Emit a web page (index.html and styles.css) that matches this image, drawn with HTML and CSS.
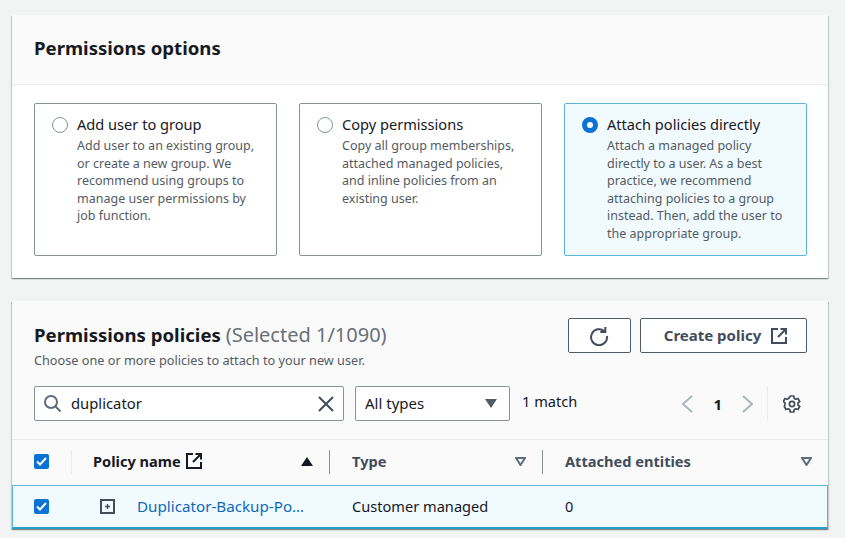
FILE: index.html
```html
<!DOCTYPE html>
<html lang="en">
<head>
    <meta charset="UTF-8">
    <title>Set permissions</title>
    <link rel="stylesheet" href="styles.css">
</head>
<body>

<section class="card options-card">
    <div class="options-head">
        <h2>Permissions options</h2>
    </div>
    <div class="options">
        <div class="option">
            <span class="radio"></span>
            <div>
                <div class="option-title">Add user to group</div>
                <div class="option-text">Add user to an existing group, or create a new group. We recommend using groups to manage user permissions by job function.</div>
            </div>
        </div>
        <div class="option">
            <span class="radio"></span>
            <div>
                <div class="option-title">Copy permissions</div>
                <div class="option-text">Copy all group memberships, attached managed policies, and inline policies from an existing user.</div>
            </div>
        </div>
        <div class="option selected">
            <span class="radio on"></span>
            <div>
                <div class="option-title">Attach policies directly</div>
                <div class="option-text">Attach a managed policy directly to a user. As a best practice, we recommend attaching policies to a group instead. Then, add the user to the appropriate group.</div>
            </div>
        </div>
    </div>
</section>

<section class="card policies-card">
    <div class="policies-head">
        <div class="policies-top">
            <div class="policies-title">
                <h2>Permissions policies <span class="count">(Selected 1/1090)</span></h2>
                <p class="sub">Choose one or more policies to attach to your new user.</p>
            </div>
            <div class="actions">
                <button class="btn btn-icon">
                    <svg width="20" height="20" viewBox="0 0 20 20" fill="none" stroke="#414d5c" stroke-width="2"><path d="M15.4 5.2A8 8 0 1 0 18 10"/><path d="M16.3 1v5h-5"/></svg>
                </button>
                <button class="btn btn-create"><span class="btn-label">Create policy</span>
                    <svg width="16" height="16" viewBox="0 0 16 16" fill="none" stroke="#414d5c" stroke-width="2"><path d="M7 1H1v14h14V9"/><path d="M9.5 1H15v5.5M15 1 7 9"/></svg>
                </button>
            </div>
        </div>
        <div class="filters">
            <div class="search">
                <svg width="17" height="17" viewBox="0 0 17 17" fill="none" stroke="#5f6b7a" stroke-width="2"><circle cx="7" cy="7" r="6"/><path d="m11.5 11.5 5 5"/></svg>
                <span class="search-text">duplicator</span>
                <svg width="16" height="16" viewBox="0 0 16 16" fill="none" stroke="#414d5c" stroke-width="2"><path d="m1 1 14 14M15 1 1 15"/></svg>
            </div>
            <div class="select">
                <span class="select-text">All types</span>
                <span class="select-caret"></span>
            </div>
            <span class="matches">1 match</span>
            <div class="pager">
                <svg width="12" height="18" viewBox="0 0 12 18" fill="none" stroke="#aab7b8" stroke-width="2"><path d="M11 1 2 9l9 8"/></svg>
                <span class="page-num">1</span>
                <svg width="12" height="18" viewBox="0 0 12 18" fill="none" stroke="#aab7b8" stroke-width="2"><path d="m1 1 9 8-9 8"/></svg>
            </div>
            <div class="settings">
                <svg width="18" height="18" viewBox="0 0 18 18" fill="none" stroke="#414d5c" stroke-width="1.7" stroke-linejoin="round"><path d="M7.3 1h3.4l.5 2.3 1.6.9 2.2-.7 1.7 3-1.7 1.5v2l1.7 1.5-1.7 3-2.2-.7-1.6.9-.5 2.3H7.3l-.5-2.3-1.6-.9-2.2.7-1.7-3L2 10V8L.3 6.5l1.7-3 2.2.7 1.6-.9z"/><circle cx="9" cy="9" r="2.6"/></svg>
            </div>
        </div>
    </div>

    <div class="table-head">
        <div class="th th-check"><span class="check"><svg width="11" height="9" viewBox="0 0 11 9" fill="none" stroke="#fff" stroke-width="2"><path d="m1 4.5 3 3L10 1"/></svg></span></div>
        <div class="th th-name">
            <span class="th-label dark">Policy name
                <svg width="16" height="16" viewBox="0 0 16 16" fill="none" stroke="#16191f" stroke-width="2"><path d="M7 1H1v14h14V9"/><path d="M9.5 1H15v5.5M15 1 7 9"/></svg>
            </span>
            <span class="sort-up"></span>
        </div>
        <div class="th th-type">
            <span class="th-label">Type</span>
            <svg class="sort-down" width="11" height="9" viewBox="0 0 11 9" fill="none" stroke="#5f6b7a" stroke-width="2"><path d="M1 1h9L5.5 8z"/></svg>
        </div>
        <div class="th th-entities">
            <span class="th-label">Attached entities</span>
            <svg class="sort-down" width="11" height="9" viewBox="0 0 11 9" fill="none" stroke="#5f6b7a" stroke-width="2"><path d="M1 1h9L5.5 8z"/></svg>
        </div>
    </div>
    <div class="table-row">
        <div class="td td-check"><span class="check"><svg width="11" height="9" viewBox="0 0 11 9" fill="none" stroke="#fff" stroke-width="2"><path d="m1 4.5 3 3L10 1"/></svg></span></div>
        <div class="td td-name">
            <svg width="15" height="15" viewBox="0 0 15 15" fill="none" stroke="#414d5c"><rect x="1" y="1" width="13" height="13" stroke-width="2"/><path d="M7.5 5v5M5 7.5h5" stroke-width="1.4"/></svg>
            <a class="policy-link" href="#">Duplicator-Backup-Po…</a>
        </div>
        <div class="td td-type">Customer managed</div>
        <div class="td td-entities">0</div>
    </div>
</section>

</body>
</html>
```

FILE: styles.css
```css
* {
    box-sizing: border-box;
}
html, body {
    height: 538px;
    overflow: hidden;
}
body {
    margin: 0;
    padding: 15px 17px 0 12px;
    background-color: #f2f3f3;
    color: #16191f;
    font-family: "Noto Sans", Arial, sans-serif;
    font-size: 14.6px;
}
h2 {
    margin: 0;
    font-size: 18.6px;
    line-height: 24px;
    font-weight: 700;
}
.card {
    background: white;
    box-shadow: 0 1px 1px rgba(0, 28, 36, 0.3), 1px 1px 1px rgba(0, 28, 36, 0.15), -1px 1px 1px rgba(0, 28, 36, 0.15);
}
.options-head {
    height: 70px;
    padding: 21px 22px 0;
    background-color: #fafafa;
    border-bottom: 1px solid #eaeded;
}
.options {
    display: grid;
    grid-template-columns: repeat(3, 243px);
    gap: 22px;
    padding: 18px 22px 22px;
}
.option {
    display: flex;
    gap: 9px;
    height: 153px;
    padding: 10px 17px;
    border: 1px solid #879596;
    border-radius: 2px;
}
.option.selected {
    background-color: #f1faff;
    border-color: #5fb4d9;
}
.radio {
    flex: none;
    width: 16px;
    height: 16px;
    margin-top: 3px;
    background: white;
    border: 1px solid #879596;
    border-radius: 50%;
}
.radio.on {
    border: 5px solid #0972d3;
}
.option-title {
    font-size: 14.6px;
    line-height: 20px;
}
.option-text {
    margin-top: 3px;
    color: #545b64;
    font-size: 12.5px;
    line-height: 17.5px;
}
.policies-card {
    margin-top: 23px;
    background-color: #fafafa;
}
.policies-head {
    height: 139px;
    padding: 17px 21px 0 22px;
    border-bottom: 1px solid #eaeded;
}
.policies-top {
    display: flex;
    justify-content: space-between;
    align-items: flex-start;
}
.policies-title {
    padding-top: 5px;
}
.count {
    color: #687078;
    font-size: 20px;
    font-weight: 400;
}
.sub {
    margin: 5px 0 0;
    color: #545b64;
    font-size: 12.7px;
    line-height: 17px;
}
.actions {
    display: flex;
    gap: 9px;
}
.btn {
    display: flex;
    align-items: center;
    justify-content: center;
    height: 35px;
    background: white;
    border: 1px solid #545b64;
    border-radius: 2px;
    color: #414d5c;
    font-family: inherit;
    font-size: 15px;
    font-weight: 700;
}
.btn-label {
    padding-bottom: 2px;
}
.btn-icon {
    width: 63px;
    padding-right: 8px;
}
.btn-create {
    width: 167px;
    padding-left: 10px;
    gap: 10px;
}
.filters {
    display: flex;
    align-items: center;
    margin-top: 17px;
}
.search {
    display: flex;
    align-items: center;
    width: 310px;
    height: 35px;
    padding: 0 9px;
    background: white;
    border: 1px solid #879596;
    border-radius: 2px;
}
.search-text {
    flex: 1;
    margin-left: 10px;
    padding-bottom: 2px;
    font-size: 14.8px;
}
.select {
    display: flex;
    align-items: center;
    justify-content: space-between;
    width: 155px;
    height: 35px;
    margin-left: 11px;
    padding: 0 12px 0 9px;
    background: white;
    border: 1px solid #879596;
    border-radius: 2px;
    font-size: 15px;
}
.select-text {
    padding-bottom: 2px;
}
.select-caret {
    border-left: 6px solid transparent;
    border-right: 6px solid transparent;
    border-top: 9px solid #545b64;
}
.matches {
    margin-left: 12px;
    margin-bottom: 6px;
}
.pager {
    display: flex;
    align-items: center;
    gap: 20px;
    margin-left: auto;
}
.page-num {
    font-size: 15px;
    font-weight: 700;
}
.settings {
    display: flex;
    align-items: center;
    height: 35px;
    margin-left: 13px;
    padding: 0 6px 0 15px;
    border-left: 1px solid #eaeded;
}
.table-head,
.table-row {
    display: grid;
    grid-template-columns: 60px 258px 213px 1fr;
}
.table-head {
    height: 45px;
    padding-bottom: 2px;
    align-items: center;
}
.th {
    display: flex;
    align-items: center;
    justify-content: space-between;
    height: 24px;
    font-weight: 700;
    border-right: 1px solid #879596;
}
.th-check {
    padding-left: 22px;
    border-right-color: #eaeded;
}
.th-name {
    padding: 0 16px 0 21px;
}
.th-type {
    padding: 0 16px 0 22px;
}
.th-entities {
    padding: 0 16px 0 22px;
    border-right: none;
}
.th-label {
    display: flex;
    align-items: center;
    gap: 5px;
    margin-bottom: 2px;
    color: #414d5c;
}
.th-label.dark {
    color: #16191f;
}
.sort-up {
    border-left: 6px solid transparent;
    border-right: 6px solid transparent;
    border-bottom: 9px solid #16191f;
}
.check {
    display: flex;
    align-items: center;
    justify-content: center;
    width: 15px;
    height: 15px;
    background-color: #0972d3;
    border-radius: 2px;
}
.table-row {
    height: 44px;
    align-items: center;
    background-color: #f1faff;
    border: 1px solid #5fb4d9;
    border-bottom: 2px solid #2a9dc4;
}
.td-check {
    padding-left: 21px;
    display: flex;
}
.td-name {
    display: flex;
    align-items: center;
    padding-left: 27px;
    gap: 22px;
}
.td-type {
    padding: 0 0 1px 21px;
}
.td-entities {
    padding: 0 0 1px 21px;
}
.policy-link {
    padding-bottom: 1px;
    color: #0f69b8;
    font-size: 15.2px;
    text-decoration: none;
}
```
